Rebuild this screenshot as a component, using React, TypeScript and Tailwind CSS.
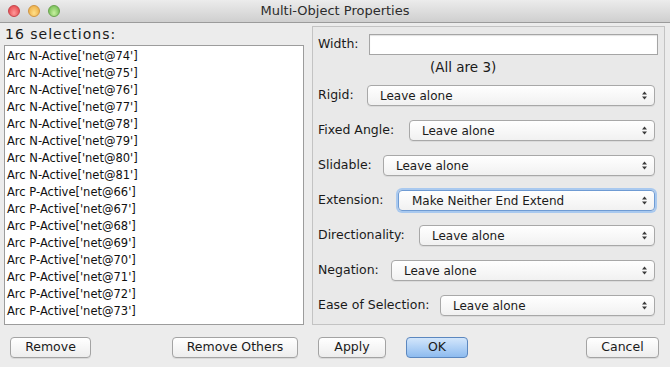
const items = [
    "Arc N-Active['net@74']",
    "Arc N-Active['net@75']",
    "Arc N-Active['net@76']",
    "Arc N-Active['net@77']",
    "Arc N-Active['net@78']",
    "Arc N-Active['net@79']",
    "Arc N-Active['net@80']",
    "Arc N-Active['net@81']",
    "Arc P-Active['net@66']",
    "Arc P-Active['net@67']",
    "Arc P-Active['net@68']",
    "Arc P-Active['net@69']",
    "Arc P-Active['net@70']",
    "Arc P-Active['net@71']",
    "Arc P-Active['net@72']",
    "Arc P-Active['net@73']",
]

// label widths put each popup where the dialog has it
const rows = [
    { label: 'Rigid:', width: 'w-[49px]', value: 'Leave alone' },
    { label: 'Fixed Angle:', width: 'w-[91px]', value: 'Leave alone' },
    { label: 'Slidable:', width: 'w-[65px]', value: 'Leave alone' },
    { label: 'Extension:', width: 'w-[80px]', value: 'Make Neither End Extend', focused: true },
    { label: 'Directionality:', width: 'w-[101px]', value: 'Leave alone' },
    { label: 'Negation:', width: 'w-[73px]', value: 'Leave alone' },
    { label: 'Ease of Selection:', width: 'w-[122px]', value: 'Leave alone' },
]

function Arrows() {
    return (
        <svg width="7" height="11" viewBox="0 0 7 11" className="text-[#3a3a3a]">
            <path d="M3.5 1.5 L6 4.5 L1 4.5 Z" fill="currentColor" />
            <path d="M1 6.5 L6 6.5 L3.5 9.5 Z" fill="currentColor" />
        </svg>
    )
}

function Popup({ value, focused }: { value: string; focused?: boolean }) {
    return (
        <div
            className={
                focused
                    ? 'flex-1 h-[21px] flex items-center pl-[13px] pr-[6px] rounded-[4px] border border-[#6f9bd3] bg-linear-to-b from-white to-[#f1f1f1] shadow-[0_0_0_2px_#a9c9ef]'
                    : 'flex-1 h-[21px] flex items-center pl-[12px] pr-[6px] rounded-[4px] border border-[#a8a8a8] bg-linear-to-b from-white to-[#f1f1f1] shadow-[0_1px_0_rgba(0,0,0,0.06)]'
            }
        >
            <span className="flex-1 text-[12px] text-[#1a1a1a]">{value}</span>
            <Arrows />
        </div>
    )
}

function Button({ label, className }: { label: string; className: string }) {
    return (
        <div
            className={`h-[21px] flex items-center justify-center rounded-[4px] border border-[#a3a3a3] bg-linear-to-b from-white to-[#ededed] shadow-[0_1px_0_rgba(0,0,0,0.08)] text-[12.5px] text-[#1a1a1a] ${className}`}
        >
            {label}
        </div>
    )
}

export default function App() {
    return (
        <div className="w-[670px] h-[367px] bg-[#ececec] flex flex-col overflow-hidden" style={{ fontFamily: '"DejaVu Sans", sans-serif' }}>
            {/* title bar */}
            <div className="relative h-[23px] flex items-center justify-center bg-linear-to-b from-[#ececec] to-[#cfcfcf] border-b border-[#9b9b9b]">
                <div className="absolute left-[8px] top-[5px] flex gap-[8px]">
                    <div className="w-[12px] h-[12px] rounded-full border border-[#c5444a] bg-radial-[at_50%_70%] from-[#ff9a9a] to-[#e0393f]" />
                    <div className="w-[12px] h-[12px] rounded-full border border-[#cf9440] bg-radial-[at_50%_70%] from-[#ffe08a] to-[#e9a338]" />
                    <div className="w-[12px] h-[12px] rounded-full border border-[#6aa24e] bg-radial-[at_50%_70%] from-[#c8f0a0] to-[#62b344]" />
                </div>
                <span className="text-[13px] text-[#2c2c2c]">Multi-Object Properties</span>
            </div>

            <div className="flex flex-1">
                {/* selection list */}
                <div className="ml-[4px] w-[300px] flex flex-col">
                    <div className="h-[22px] pl-[1px] pt-[3px] text-[14px] tracking-[1px] leading-[17px] text-[#1a1a1a]">16 selections:</div>
                    <div className="h-[280px] bg-white border border-[#9c9c9c] pt-[2px] pl-[2px]">
                        {items.map((item) => (
                            <div key={item} className="h-[17px] leading-[17px] text-[11.5px] text-[#111]">
                                {item}
                            </div>
                        ))}
                    </div>
                    <div className="flex mt-[12px]">
                        <Button label="Remove" className="ml-[6px] w-[81px]" />
                        <Button label="Remove Others" className="ml-[81px] w-[126px]" />
                    </div>
                </div>

                {/* properties */}
                <div className="ml-[8px] w-[353px] flex flex-col">
                    <div className="mt-[3px] h-[299px] border border-[#c3c3c3] bg-[#e9e9e9] pl-[5px] pt-[7px] flex flex-col">
                        <div className="flex items-center h-[21px] mr-[6px]">
                            <span className="w-[51px] text-[12.5px] text-[#1a1a1a]">Width:</span>
                            <div className="flex-1 h-[21px] bg-white border border-[#a5a5a5] shadow-[inset_0_1px_1px_rgba(0,0,0,0.12)]" />
                        </div>
                        <div className="mt-[4px] h-[17px] leading-[17px] pl-[112px] text-[13.5px] text-[#1a1a1a]">(All are 3)</div>
                        <div className="mt-[9px] flex flex-col gap-[14px] mr-[9px]">
                            {rows.map((row) => (
                                <div key={row.label} className="flex items-center h-[21px]">
                                    <span className={`${row.width} text-[12.5px] text-[#1a1a1a]`}>{row.label}</span>
                                    <Popup value={row.value} focused={row.focused} />
                                </div>
                            ))}
                        </div>
                    </div>
                    <div className="flex mt-[12px]">
                        <Button label="Apply" className="ml-[6px] w-[68px]" />
                        <div className="ml-[20px] w-[62px] h-[21px] flex items-center justify-center rounded-[4px] border border-[#5b87bf] bg-linear-to-b from-[#d3e6fb] to-[#8dbbef] text-[12.5px] text-[#1a1a1a]">
                            OK
                        </div>
                        <Button label="Cancel" className="ml-[118px] w-[73px]" />
                    </div>
                </div>
            </div>
        </div>
    )
}
